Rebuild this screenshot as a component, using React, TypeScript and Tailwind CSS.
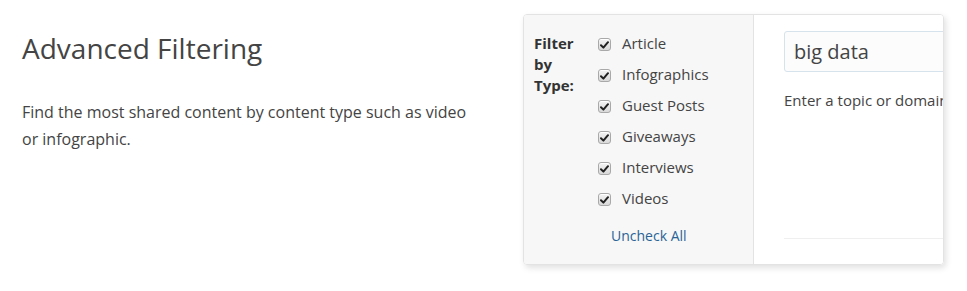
import React from "react";

const types = ["Article", "Infographics", "Guest Posts", "Giveaways", "Interviews", "Videos"];

function Check() {
  return (
    <span className="flex h-[13px] w-[13px] items-center justify-center rounded-[3px] border border-[#a9a9a9] bg-gradient-to-b from-[#f4f4f4] to-[#d9d9d9] shadow-[inset_0_1px_0_#fff]">
      <svg width="9" height="8" viewBox="0 0 9 8">
        <path d="M1 4.3 L3.4 6.6 L8 1.2" fill="none" stroke="#222" strokeWidth="2" strokeLinecap="round" strokeLinejoin="round" />
      </svg>
    </span>
  );
}

export default function App() {
  return (
    <div className="flex h-[291px] w-[967px] bg-white text-[#444]" style={{ fontFamily: '"Open Sans", sans-serif' }}>
      <div className="w-[523px] shrink-0 pl-[22px] pt-[28px]">
        <h2 className="text-[28px] leading-[40px] font-normal text-[#444]">Advanced Filtering</h2>
        <p className="mt-[31px] w-[460px] text-[16px] leading-[27px] text-[#444]">
          Find the most shared content by content type such as video or infographic.
        </p>
      </div>
      <div className="mt-[14px] flex h-[251px] w-[421px] shrink-0 overflow-hidden rounded-[4px] border border-[#e3e3e3] shadow-[2px_3px_6px_rgba(0,0,0,0.12)]">
        <div className="flex w-[230px] shrink-0 flex-col border-r border-[#e3e3e3] bg-[#f7f7f7] pl-[10px] pt-[18px]">
          <div className="flex">
            <div className="w-[64px] text-[15px] leading-[21px] font-bold text-[#333]">
              Filter
              <br />
              by
              <br />
              Type:
            </div>
            <div className="-mt-[4px] flex flex-col">
              {types.map((t) => (
                <label key={t} className="flex h-[31px] items-center gap-[11px] text-[15px] text-[#444]">
                  <Check />
                  <span className="-mt-[3px]">{t}</span>
                </label>
              ))}
            </div>
          </div>
          <a className="mt-[11px] ml-[77px] text-[14px] leading-[20px] text-[#2a6496]">Uncheck All</a>
        </div>
        <div className="flex-1 bg-white pl-[30px] pt-[16px]">
          <div className="flex h-[41px] w-[240px] items-center rounded-l-[3px] border border-[#d6e2ec] bg-[#fcfcfc] pl-[9px] text-[20px] text-[#444]">
            big data
          </div>
          <div className="mt-[17px] whitespace-nowrap text-[15px] leading-[22px] text-[#444]">Enter a topic or domain</div>
          <div className="mt-[127px] h-px w-[200px] bg-[#efefef]" />
        </div>
      </div>
    </div>
  );
}
